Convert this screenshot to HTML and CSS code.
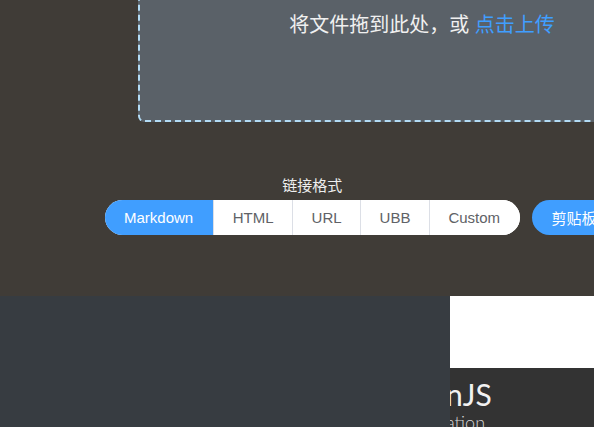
FILE: index.html
```html
<!DOCTYPE html>
<html lang="zh">
<head>
<meta charset="utf-8">
<title>上传</title>
<link rel="stylesheet" href="styles.css">
</head>
<body>
<div class="page">
  <section class="top">
    <div class="upload">
      <div class="upload-text">将文件拖到此处，或 <em>点击上传</em></div>
    </div>
    <div class="format-row">
      <div class="format">
        <div class="format-label">链接格式</div>
        <div class="btn-group">
          <span class="seg active">Markdown</span>
          <span class="seg">HTML</span>
          <span class="seg">URL</span>
          <span class="seg">UBB</span>
          <span class="seg">Custom</span>
        </div>
      </div>
      <span class="clip-btn">剪贴板上传</span>
    </div>
  </section>
  <section class="bottom">
    <div class="side"></div>
    <div class="card">
      <div class="card-img"></div>
      <div class="card-body">
        <div class="card-title">nJS</div>
        <div class="card-sub">ation</div>
      </div>
    </div>
  </section>
</div>
</body>
</html>
```

FILE: styles.css
```css
html, body {
  margin: 0;
  padding: 0;
  width: 594px;
  height: 427px;
  overflow: hidden;
  background: #403c37;
  font-family: "Liberation Sans", "Noto Sans CJK SC", sans-serif;
}
.page {
  display: flex;
  flex-direction: column;
  height: 427px;
}
.top {
  height: 296px;
  background: #403c37;
  overflow: hidden;
  flex: none;
}
.upload {
  margin-top: -78px;
  margin-left: 138px;
  width: 568px;
  height: 200px;
  box-sizing: border-box;
  border: 2px dashed #b3dcf5;
  border-radius: 6px;
  background: #5a6168;
  display: flex;
  flex-direction: column;
  justify-content: flex-start;
  align-items: center;
}
.upload-text {
  margin-top: 89px;
  font-size: 20px;
  line-height: 24px;
  color: #f0f0f0;
}
.upload-text em {
  font-style: normal;
  color: #409eff;
}
.format-row {
  display: flex;
  align-items: flex-end;
  gap: 12px;
  margin-left: 105px;
  margin-top: 55px;
}
.format {
  display: flex;
  flex-direction: column;
  align-items: center;
}
.format-label {
  font-size: 15px;
  line-height: 18px;
  color: #eeeeee;
  margin-bottom: 5px;
}
.btn-group {
  display: flex;
  height: 35px;
  border-radius: 18px;
  overflow: hidden;
  background: #ffffff;
}
.seg {
  display: flex;
  align-items: center;
  padding: 0 18.5px;
  font-size: 15px;
  color: #606266;
  border-left: 1px solid #dcdfe6;
  background: #ffffff;
}
.seg.active {
  background: #409eff;
  color: #ffffff;
  border-left: none;
  padding: 0 20px 0 19px;
}
.seg:last-child {
  padding-right: 19.5px;
}
.clip-btn {
  display: flex;
  align-items: center;
  height: 35px;
  padding: 0 20px;
  border-radius: 18px;
  background: #409eff;
  color: #ffffff;
  font-size: 15px;
  white-space: nowrap;
}
.bottom {
  flex: 1;
  display: flex;
}
.side {
  width: 450px;
  background: #373c41;
  flex: none;
}
.card {
  flex: 1;
  display: flex;
  flex-direction: column;
  background: #333333;
  overflow: hidden;
}
.card-img {
  height: 72px;
  background: #ffffff;
  flex: none;
}
.card-body {
  padding-top: 8px;
  margin-left: -4px;
}
.card-title {
  font-family: Lato, "Noto Sans", sans-serif;
  font-size: 30px;
  line-height: 36px;
  color: #f2f2f2;
}
.card-sub {
  font-family: Lato, "Noto Sans", sans-serif;
  font-weight: 300;
  font-size: 18px;
  line-height: 20px;
  color: #d8d8d8;
}
```
